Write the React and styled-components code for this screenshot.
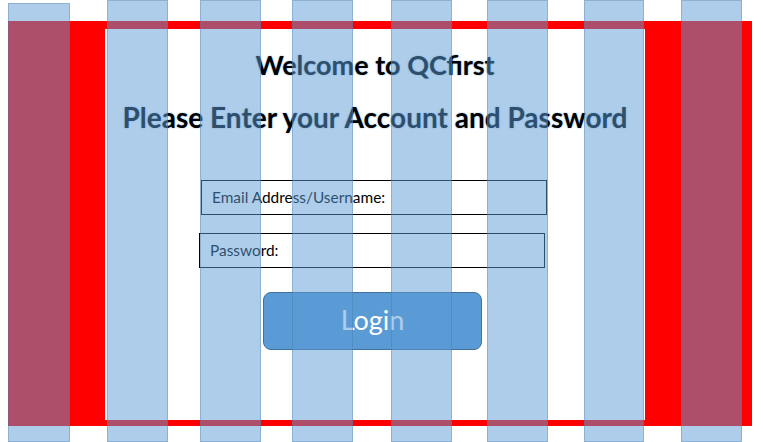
import React from "react";
import styled, { createGlobalStyle } from "styled-components";

const Global = createGlobalStyle`
  html, body { margin: 0; padding: 0; background: #ffffff; }
  body { width: 763px; height: 442px; overflow: hidden; font-family: Lato, "Open Sans", sans-serif; }
  * { box-sizing: border-box; }
`;

const Page = styled.div`
  position: relative;
  width: 763px;
  height: 442px;
  padding: 21px 0 0 8px;
`;

const Frame = styled.div`
  width: 744px;
  height: 405px;
  background: #ff0000;
  padding: 8px 107px 6px 97px;
`;

const Panel = styled.main`
  height: 100%;
  background: #ffffff;
  display: flex;
  flex-direction: column;
  align-items: center;
  padding-top: 21px;
`;

const Heading = styled.h1`
  margin: ${(p) => p.$mt}px 0 0 0;
  font-family: Lato, "Open Sans", sans-serif;
  font-weight: 700;
  font-size: ${(p) => p.$size}px;
  line-height: 30px;
  color: #000000;
  text-shadow: 0 0 2px rgba(91, 155, 213, 0.7);
  white-space: nowrap;
`;

const Form = styled.form`
  align-self: stretch;
  display: flex;
  flex-direction: column;
  margin-top: 48px;
`;

const Field = styled.input`
  width: 346px;
  height: 35px;
  margin: ${(p) => p.$mt}px 0 0 ${(p) => p.$ml}px;
  border: 1px solid #000000;
  background: transparent;
  padding: 0 0 2px 10px;
  font-family: Lato, "Open Sans", sans-serif;
  font-size: 15.4px;
  color: #000000;
  outline: none;
  &::placeholder { color: #000000; opacity: 1; }
`;

const LoginButton = styled.button`
  align-self: center;
  margin: 24px 0 0 -5px;
  width: 219px;
  height: 58px;
  border-radius: 8px;
  background: #5b9bd5;
  border: 1px solid #41719c;
  color: #ffffff;
  font-family: Lato, "Open Sans", sans-serif;
  font-size: 27px;
  font-weight: 400;
  padding: 0 0 4px 0;
  cursor: pointer;
`;

const StripeLayer = styled.div`
  position: absolute;
  inset: 0;
  pointer-events: none;
`;

const Stripe = styled.div`
  position: absolute;
  top: ${(p) => p.$top}px;
  bottom: 0;
  left: ${(p) => p.$x}px;
  width: ${(p) => p.$w}px;
  background: rgba(91, 155, 213, 0.5);
  border: 1px solid rgba(65, 113, 156, 0.3);
`;

const stripes = [
  { x: 8, w: 62, top: 3 },
  { x: 107, w: 61, top: 0 },
  { x: 200, w: 61, top: 0 },
  { x: 292, w: 61, top: 0 },
  { x: 391, w: 61, top: 0 },
  { x: 487, w: 61, top: 0 },
  { x: 584, w: 60, top: 0 },
  { x: 681, w: 61, top: 0 },
];

export default function App() {
  return (
    <>
      <Global />
      <Page>
        <Frame>
          <Panel>
            <Heading $size={27} $mt={0}>Welcome to QCfirst</Heading>
            <Heading $size={28} $mt={22}>Please Enter your Account and Password</Heading>
            <Form onSubmit={(e) => e.preventDefault()}>
              <Field $mt={0} $ml={96} placeholder="Email Address/Username:" />
              <Field $mt={18} $ml={94} type="password" placeholder="Password:" />
              <LoginButton type="submit">Login</LoginButton>
            </Form>
          </Panel>
        </Frame>
        <StripeLayer>
          {stripes.map((s, i) => (
            <Stripe key={i} $x={s.x} $w={s.w} $top={s.top} />
          ))}
        </StripeLayer>
      </Page>
    </>
  );
}
